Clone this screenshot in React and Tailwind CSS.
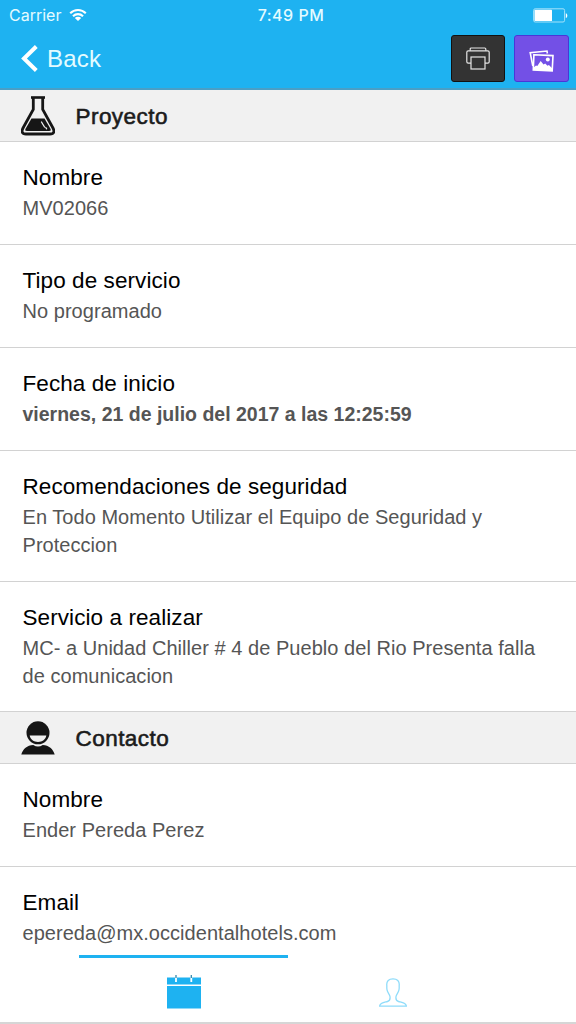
const proyecto = [
  { label: "Nombre", value: "MV02066" },
  { label: "Tipo de servicio", value: "No programado" },
  { label: "Fecha de inicio", value: "viernes, 21 de julio del 2017 a las 12:25:59", bold: true },
  { label: "Recomendaciones de seguridad", value: "En Todo Momento Utilizar el Equipo de Seguridad y Proteccion" },
  { label: "Servicio a realizar", value: "MC- a Unidad Chiller # 4 de Pueblo del Rio Presenta falla de comunicacion", last: true },
];

const contacto = [
  { label: "Nombre", value: "Ender Pereda Perez" },
  { label: "Email", value: "epereda@mx.occidentalhotels.com" },
];

function StatusBar() {
  return (
    <div className="grid grid-cols-3 items-center h-[30px] pl-[9px] pr-[8px] text-[16px] text-[#e4fbff] font-['Inter',sans-serif]">
      <div className="flex items-center gap-[8px]">
        <span>Carrier</span>
        <svg width="18" height="14" viewBox="0 0 18 14" fill="none" stroke="#fff" strokeWidth="2.1">
          <path d="M1.2 5.2a11 11 0 0 1 15.6 0M4 8.2a7 7 0 0 1 10 0" />
          <path d="M5.8 10a4.5 4.5 0 0 1 6.4 0L9 13.1z" fill="#fff" stroke="none" />
        </svg>
      </div>
      <span className="text-center font-medium tracking-[0.5px] pl-[5px]">7:49 PM</span>
      <svg className="justify-self-end" width="35" height="15" viewBox="0 0 35 15">
        <rect x="0.6" y="0.8" width="31" height="13.2" rx="1.6" fill="none" stroke="#a4e2fa" />
        <rect x="1.5" y="1.8" width="17.5" height="11.2" rx="0.6" fill="#fff" />
        <path d="M32.8 5.2c2 .6 2 4.2 0 4.8z" fill="#fff" />
      </svg>
    </div>
  );
}

function PrinterIcon() {
  return (
    <svg width="24" height="23" viewBox="0 0 24 23" fill="none" stroke="#e5e5e5" strokeWidth="1.2">
      <path d="M4.2 3.8V2q0-1 1-1h13.6q1 0 1 1v1.8" />
      <path d="M5 16.2H2.2q-1.400 0-1.400-1.400V5.300q0-1.400 1.400-1.400h19.600q1.400 0 1.400 1.400v9.500q0 1.400-1.400 1.400H19" />
      <rect x="5" y="10" width="14" height="12" />
    </svg>
  );
}

function ImagesIcon() {
  return (
    <svg width="25" height="22" viewBox="0 0 25 22">
      <path d="M3.800 16 1.200 2.600 18 1l.4 2.500" fill="none" stroke="#fff" strokeWidth="1.600" />
      <path d="M4.900 4.800 24 5.600l-.8 15.200-18.900-.9z" fill="none" stroke="#fff" strokeWidth="1.600" />
      <path d="M4.600 17.500l2.400-2 1.300.6 3.400-5 2.800 3.400 1.700-.9 2.300 2.200 1.400-.7 3.500 3.400v2.300l-19-.9z" fill="#fff" />
      <circle cx="18.800" cy="9.600" r="2" fill="#fff" />
    </svg>
  );
}

function FlaskIcon() {
  return (
    <svg width="34" height="40" viewBox="0 0 34 40">
      <path d="M10 1.500h14" stroke="#161616" strokeWidth="2.600" />
      <path d="M12.300 2v11.500L2.300 31.500C0 35.500 1 38 5 38h24c4 0 5-2.500 2.700-6.500L21.700 13.500V2" fill="none" stroke="#161616" strokeWidth="2.800" />
      <path d="M10.500 22.500h13l5.800 10c1 1.800.6 2.500-1.300 2.500H6c-1.900 0-2.300-.7-1.300-2.500z" fill="#161616" />
      <path d="m20.500 26 3 5M24.800 31.500l.8 1.300" stroke="#f1f1f1" strokeWidth="1.300" strokeLinecap="round" />
    </svg>
  );
}

function ContactIcon() {
  return (
    <svg width="34" height="34" viewBox="0 0 34 34">
      <path d="M0.300 33.600C2 27.600 6 24.300 12.300 23.900q4.700 3.300 9.400 0C28 24.300 32 27.600 33.700 33.600z" fill="#161616" />
      <circle cx="17" cy="11.800" r="11.500" fill="#161616" />
      <path d="M8.700 14.500h16.600c-.7 4.200-4 6.400-8.300 6.400s-7.600-2.200-8.300-6.400z" fill="#f1f1f1" />
    </svg>
  );
}

function SectionHeader({ icon, title }) {
  return (
    <div className="flex items-center h-[52px] bg-[#f1f1f1] border-b border-[#d2d2d2] pl-[21px]">
      <div className="w-[54.5px]">{icon}</div>
      <h2 className="pt-[2px] text-[22.5px] leading-[28px] text-[#1c1c1c] tracking-[0.45px] [-webkit-text-stroke:0.6px_#1c1c1c]">{title}</h2>
    </div>
  );
}

function Row({ label, value, bold, last }) {
  return (
    <div className={`${last ? "pb-[21px]" : "pb-[22px]"} pt-[21px] px-[22.5px] border-b border-[#d2d2d2]`}>
      <div className="mb-px text-[22.5px] leading-[30px] text-black tracking-[0.08px]">{label}</div>
      <div className={bold ? "text-[19.5px] leading-[28px] text-[#555] font-bold" : "text-[20px] leading-[28px] text-[#555] tracking-[0.04px]"}>
        {value}
      </div>
    </div>
  );
}

export default function App() {
  return (
    <div className="h-screen flex flex-col overflow-hidden bg-white font-['Liberation_Sans',sans-serif]">
      <header className="h-[90px] shrink-0 bg-[#1eb2f1] border-b-2 border-[#4a9fc6]">
        <StatusBar />
        <div className="flex items-center justify-between pl-[21px] pr-[7px] pt-[5px]">
          <button className="flex items-center gap-[9px] text-[#e4fbff]">
            <svg width="17" height="27" viewBox="0 0 17 27" fill="none" stroke="#fff" strokeWidth="4">
              <path d="M15.300 1.500 3 13.500l12.300 12" />
            </svg>
            <span className="text-[24px] leading-[30px] tracking-[0.2px]">Back</span>
          </button>
          <div className="flex gap-[9px]">
            <button className="flex items-center justify-center w-[54px] h-[47px] rounded-[3px] bg-[#333] border border-[#111]">
              <PrinterIcon />
            </button>
            <button className="flex items-center justify-center w-[55px] h-[47px] pt-[5px] rounded-[3px] bg-[#7350e6] border border-[#4a36d8]">
              <ImagesIcon />
            </button>
          </div>
        </div>
      </header>

      <main className="flex-1 min-h-0 overflow-hidden">
        <SectionHeader icon={<FlaskIcon />} title="Proyecto" />
        {proyecto.map((item) => (
          <Row key={item.label} {...item} />
        ))}
        <SectionHeader icon={<ContactIcon />} title="Contacto" />
        {contacto.map((item) => (
          <Row key={item.label} {...item} />
        ))}
      </main>

      <footer className="h-[69px] shrink-0 bg-white border-b-2 border-[#d6d6d6] px-[79px]">
        <div className="w-[209px] h-[3px] bg-[#1eb2f1]" />
        <div className="grid grid-cols-2 justify-items-center items-center pt-[17px]">
          <svg width="34" height="34" viewBox="0 0 34 34">
            <path d="M0 2.500h34v7H0zM0 11h34v22.500H0z" fill="#1eb2f1" />
            <path d="M9 0v7M24.300 0v7" stroke="#fff" strokeWidth="1.800" />
            <path d="M9 0v3M24.300 0v3" stroke="#3389ad" strokeWidth="1.300" />
          </svg>
          <svg width="28" height="29" viewBox="0 0 28 29" fill="none" stroke="#8fdcfa" strokeWidth="1.300">
            <path d="M14 .8C9.800.8 7.400 3 7.800 7.200c.1 2-.2 3 .3 5 .5 2.600 2.200 3.500 2.800 6 .5 2.500.6 4.500-2.400 5.300-3 .8-7.500 1-7.900 4.700h26.800c-.4-3.700-4.900-3.900-7.900-4.700-3-.8-2.900-2.800-2.400-5.300.6-2.500 2.300-3.400 2.800-6 .5-2 .2-3 .3-5C20.600 3 18.200.8 14 .8z" />
          </svg>
        </div>
      </footer>
    </div>
  );
}
